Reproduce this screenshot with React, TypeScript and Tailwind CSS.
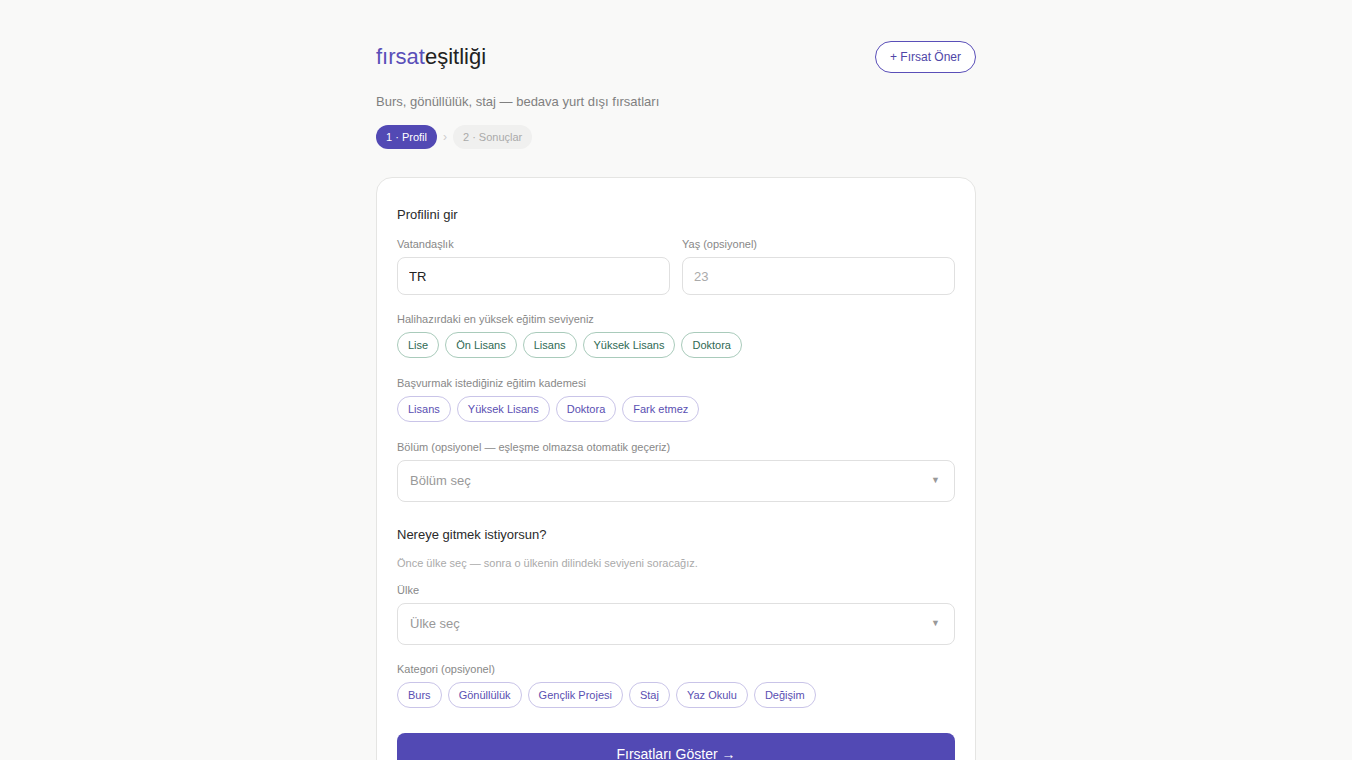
import { useState } from 'react'

const currentLevels = ['Lise', 'Ön Lisans', 'Lisans', 'Yüksek Lisans', 'Doktora']
const targetLevels = ['Lisans', 'Yüksek Lisans', 'Doktora', 'Fark etmez']
const categories = ['Burs', 'Gönüllülük', 'Gençlik Projesi', 'Staj', 'Yaz Okulu', 'Değişim']

function Label({ children }: { children: React.ReactNode }) {
  return <div className="text-[11px] leading-[14px] text-[#888]">{children}</div>
}

function Chip({ label, tone }: { label: string; tone: 'green' | 'purple' }) {
  const cls =
    tone === 'green'
      ? 'border-[#a9cbbb] text-[#2f6a54]'
      : 'border-[#c9c4e8] text-[#5a4fb2]'
  return (
    <button
      className={`h-[26px] rounded-full border bg-white px-[10px] text-[11px] leading-none ${cls}`}
    >
      {label}
    </button>
  )
}

function Select({ placeholder }: { placeholder: string }) {
  return (
    <div className="flex h-[42px] items-center justify-between rounded-lg border border-[#e0e0e0] bg-white pl-3 pr-[14px]">
      <span className="text-[13px] text-[#999]">{placeholder}</span>
      <span className="text-[9px] text-[#999]">▼</span>
    </div>
  )
}

export default function App() {
  const [citizenship, setCitizenship] = useState('TR')

  return (
    <div
      className="min-h-screen bg-[#f9f9f8] text-[#222]"
      style={{ fontFamily: '"Liberation Sans", Arial, sans-serif' }}
    >
      <div className="mx-auto w-[600px] pt-[41px] pb-10">
        <header className="flex items-center justify-between">
          <h1 className="text-[22px] leading-8">
            <span className="text-[#5a4fb8]">fırsat</span>
            <span className="text-[#222]">eşitliği</span>
          </h1>
          <button className="h-8 rounded-full border border-[#5a4fb8] bg-white px-[14px] text-[12px] text-[#4f46a8]">
            + Fırsat Öner
          </button>
        </header>

        <p className="mt-5 text-[13px] leading-[18px] text-[#808080]">
          Burs, gönüllülük, staj — bedava yurt dışı fırsatları
        </p>

        <div className="mt-[14px] flex items-center gap-[6px]">
          <span className="flex h-6 items-center rounded-full bg-[#5249b4] px-[10px] text-[11px] text-white">
            1 · Profil
          </span>
          <span className="text-[12px] text-[#ccc]">›</span>
          <span className="flex h-6 items-center rounded-full bg-[#f0f0ef] px-[10px] text-[11px] text-[#aaa]">
            2 · Sonuçlar
          </span>
        </div>

        <div className="mt-[28px] rounded-2xl border border-[#e5e5e3] bg-white px-5 pt-[28px] pb-6">
          <h2 className="text-[13px] leading-[18px] text-[#2a2a2a]">Profilini gir</h2>

          <div className="mt-[13px] grid grid-cols-2 gap-3">
            <div className="flex flex-col gap-[6px]">
              <Label>Vatandaşlık</Label>
              <input
                value={citizenship}
                onChange={(e) => setCitizenship(e.target.value)}
                className="h-[38px] rounded-lg border border-[#e0e0e0] bg-white px-[11px] text-[13px] text-[#222] outline-none"
              />
            </div>
            <div className="flex flex-col gap-[6px]">
              <Label>Yaş (opsiyonel)</Label>
              <input
                placeholder="23"
                className="h-[38px] rounded-lg border border-[#e0e0e0] bg-white px-[11px] text-[13px] text-[#222] outline-none placeholder:text-[#aaa]"
              />
            </div>
          </div>

          <div className="mt-[17px] flex flex-col gap-[6px]">
            <Label>Halihazırdaki en yüksek eğitim seviyeniz</Label>
            <div className="flex flex-wrap gap-[6px]">
              {currentLevels.map((l) => (
                <Chip key={l} label={l} tone="green" />
              ))}
            </div>
          </div>

          <div className="mt-[18px] flex flex-col gap-[6px]">
            <Label>Başvurmak istediğiniz eğitim kademesi</Label>
            <div className="flex flex-wrap gap-[6px]">
              {targetLevels.map((l) => (
                <Chip key={l} label={l} tone="purple" />
              ))}
            </div>
          </div>

          <div className="mt-[18px] flex flex-col gap-[6px]">
            <Label>Bölüm (opsiyonel — eşleşme olmazsa otomatik geçeriz)</Label>
            <Select placeholder="Bölüm seç" />
          </div>

          <h2 className="mt-6 text-[13px] leading-[18px] text-[#2a2a2a]">Nereye gitmek istiyorsun?</h2>
          <p className="mt-3 text-[11px] leading-[14px] text-[#aaa]">
            Önce ülke seç — sonra o ülkenin dilindeki seviyeni soracağız.
          </p>

          <div className="mt-[13px] flex flex-col gap-[6px]">
            <Label>Ülke</Label>
            <Select placeholder="Ülke seç" />
          </div>

          <div className="mt-[17px] flex flex-col gap-[6px]">
            <Label>Kategori (opsiyonel)</Label>
            <div className="flex flex-wrap gap-[6px]">
              {categories.map((c) => (
                <Chip key={c} label={c} tone="purple" />
              ))}
            </div>
          </div>

          <button className="mt-[25px] h-[42px] w-full rounded-lg bg-[#5249b4] text-[14px] text-white">
            Fırsatları Göster →
          </button>
        </div>
      </div>
    </div>
  )
}
